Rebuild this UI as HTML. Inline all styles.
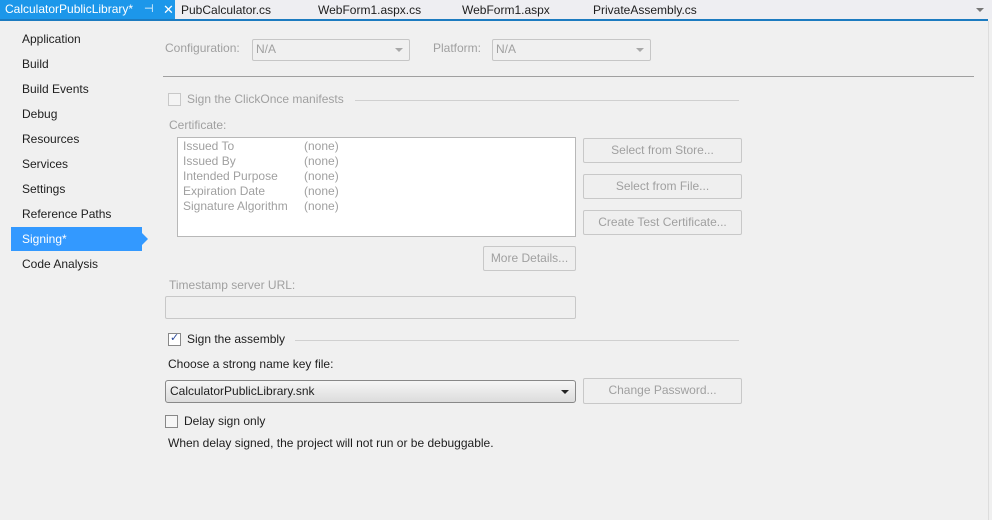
<!DOCTYPE html><html><head><style>
*{margin:0;padding:0;box-sizing:border-box}
body{width:992px;height:520px;background:#f0f0f0;font-family:"Liberation Sans",sans-serif;font-size:12px;color:#1e1e1e;position:relative;overflow:hidden}
.a{position:absolute;white-space:nowrap}
.g{color:#a0a0a0}
.btn{position:absolute;border:1px solid #c8c8c8;border-radius:2px;background:#efefef;color:#a0a0a0;text-align:center;line-height:23px}
.cb{position:absolute;width:13px;height:13px;border:1px solid #aaa;background:#f4f4f4}
.combo{position:absolute;border:1px solid #c6c6c6;border-radius:2px;background:#f0f0f0;color:#a0a0a0;padding-left:3px;line-height:19px}
.ar{position:absolute;right:6px;top:8px;width:0;height:0;border-left:4px solid transparent;border-right:4px solid transparent;border-top:4px solid #a8a8a8}
.ln{position:absolute;height:1px;background:#d0d0d0}
</style></head><body>
<div class="a" style="left:0;top:0;width:992px;height:19px;background:#eeeef2"></div>
<div class="a" style="left:0;top:19px;width:988px;height:2px;background:#1c7bc0"></div>
<div class="a" style="left:0;top:0;width:175px;height:19px;background:#1c97ea;color:#fff;padding-left:5px;line-height:19px">CalculatorPublicLibrary*</div>
<div class="a" style="left:144px;top:0;color:#fff;line-height:19px;font-size:11px">⊣</div>
<div class="a" style="left:163px;top:0;color:#fff;line-height:19px;font-size:13px">✕</div>
<div class="a" style="left:181px;top:0;line-height:21px">PubCalculator.cs</div>
<div class="a" style="left:318px;top:0;line-height:21px">WebForm1.aspx.cs</div>
<div class="a" style="left:462px;top:0;line-height:21px">WebForm1.aspx</div>
<div class="a" style="left:593px;top:0;line-height:21px">PrivateAssembly.cs</div>
<div class="a" style="left:976px;top:8px;border-left:4px solid transparent;border-right:4px solid transparent;border-top:4px solid #777"></div>
<div class="a" style="left:988px;top:21px;width:1px;height:499px;background:#ddd"></div>

<div class="a" style="left:11px;top:227px;width:131px;height:24px;background:#3399ff"></div>
<div class="a" style="left:142px;top:233px;border-top:6px solid transparent;border-bottom:6px solid transparent;border-left:6px solid #3399ff"></div>
<div class="a" style="left:22px;top:31px;line-height:16px">Application</div>
<div class="a" style="left:22px;top:56px;line-height:16px">Build</div>
<div class="a" style="left:22px;top:81px;line-height:16px">Build Events</div>
<div class="a" style="left:22px;top:106px;line-height:16px">Debug</div>
<div class="a" style="left:22px;top:131px;line-height:16px">Resources</div>
<div class="a" style="left:22px;top:156px;line-height:16px">Services</div>
<div class="a" style="left:22px;top:181px;line-height:16px">Settings</div>
<div class="a" style="left:22px;top:206px;line-height:16px">Reference Paths</div>
<div class="a" style="left:22px;top:231px;line-height:16px;color:#fff">Signing*</div>
<div class="a" style="left:22px;top:256px;line-height:16px">Code Analysis</div>

<div class="a g" style="left:165px;top:41px">Configuration:</div>
<div class="combo" style="left:252px;top:39px;width:158px;height:22px">N/A<div class="ar"></div></div>
<div class="a g" style="left:433px;top:41px">Platform:</div>
<div class="combo" style="left:492px;top:39px;width:159px;height:22px">N/A<div class="ar"></div></div>
<div class="ln" style="left:163px;top:76px;width:811px;background:#a0a0a0"></div>

<div class="cb" style="left:168px;top:93px;border-color:#c8c8c8"></div>
<div class="a g" style="left:187px;top:92px">Sign the ClickOnce manifests</div>
<div class="ln" style="left:355px;top:100px;width:384px"></div>
<div class="a g" style="left:169px;top:118px">Certificate:</div>
<div class="a" style="left:177px;top:137px;width:399px;height:100px;background:#fff;border:1px solid #b8b8b8"></div>
<div class="a g" style="left:183px;top:139px;line-height:15px">Issued To<br>Issued By<br>Intended Purpose<br>Expiration Date<br>Signature Algorithm</div>
<div class="a g" style="left:304px;top:139px;line-height:15px">(none)<br>(none)<br>(none)<br>(none)<br>(none)</div>
<div class="btn" style="left:583px;top:138px;width:159px;height:25px">Select from Store...</div>
<div class="btn" style="left:583px;top:174px;width:159px;height:25px">Select from File...</div>
<div class="btn" style="left:583px;top:210px;width:159px;height:25px">Create Test Certificate...</div>
<div class="btn" style="left:483px;top:246px;width:93px;height:25px">More Details...</div>
<div class="a g" style="left:169px;top:278px">Timestamp server URL:</div>
<div class="a" style="left:165px;top:296px;width:411px;height:23px;border:1px solid #c8c8c8;border-radius:2px;background:#efefef"></div>

<div class="cb" style="left:168px;top:333px;background:#fff;border-color:#888"><span style="position:absolute;left:1px;top:-3px;color:#2b4a9a;font-size:11px">✓</span></div>
<div class="a" style="left:187px;top:332px">Sign the assembly</div>
<div class="ln" style="left:295px;top:340px;width:444px"></div>
<div class="a" style="left:168px;top:357px">Choose a strong name key file:</div>
<div class="a" style="left:165px;top:380px;width:411px;height:23px;border:1px solid #888;border-radius:3px;background:linear-gradient(#f6f6f6,#dcdcdc);padding-left:4px;line-height:21px">CalculatorPublicLibrary.snk<div class="ar" style="border-top-color:#222;top:9px"></div></div>
<div class="btn" style="left:583px;top:378px;width:159px;height:26px">Change Password...</div>
<div class="cb" style="left:165px;top:415px;border-color:#888;background:#f6f6f6"></div>
<div class="a" style="left:184px;top:414px">Delay sign only</div>
<div class="a" style="left:168px;top:436px">When delay signed, the project will not run or be debuggable.</div>
</body></html>
